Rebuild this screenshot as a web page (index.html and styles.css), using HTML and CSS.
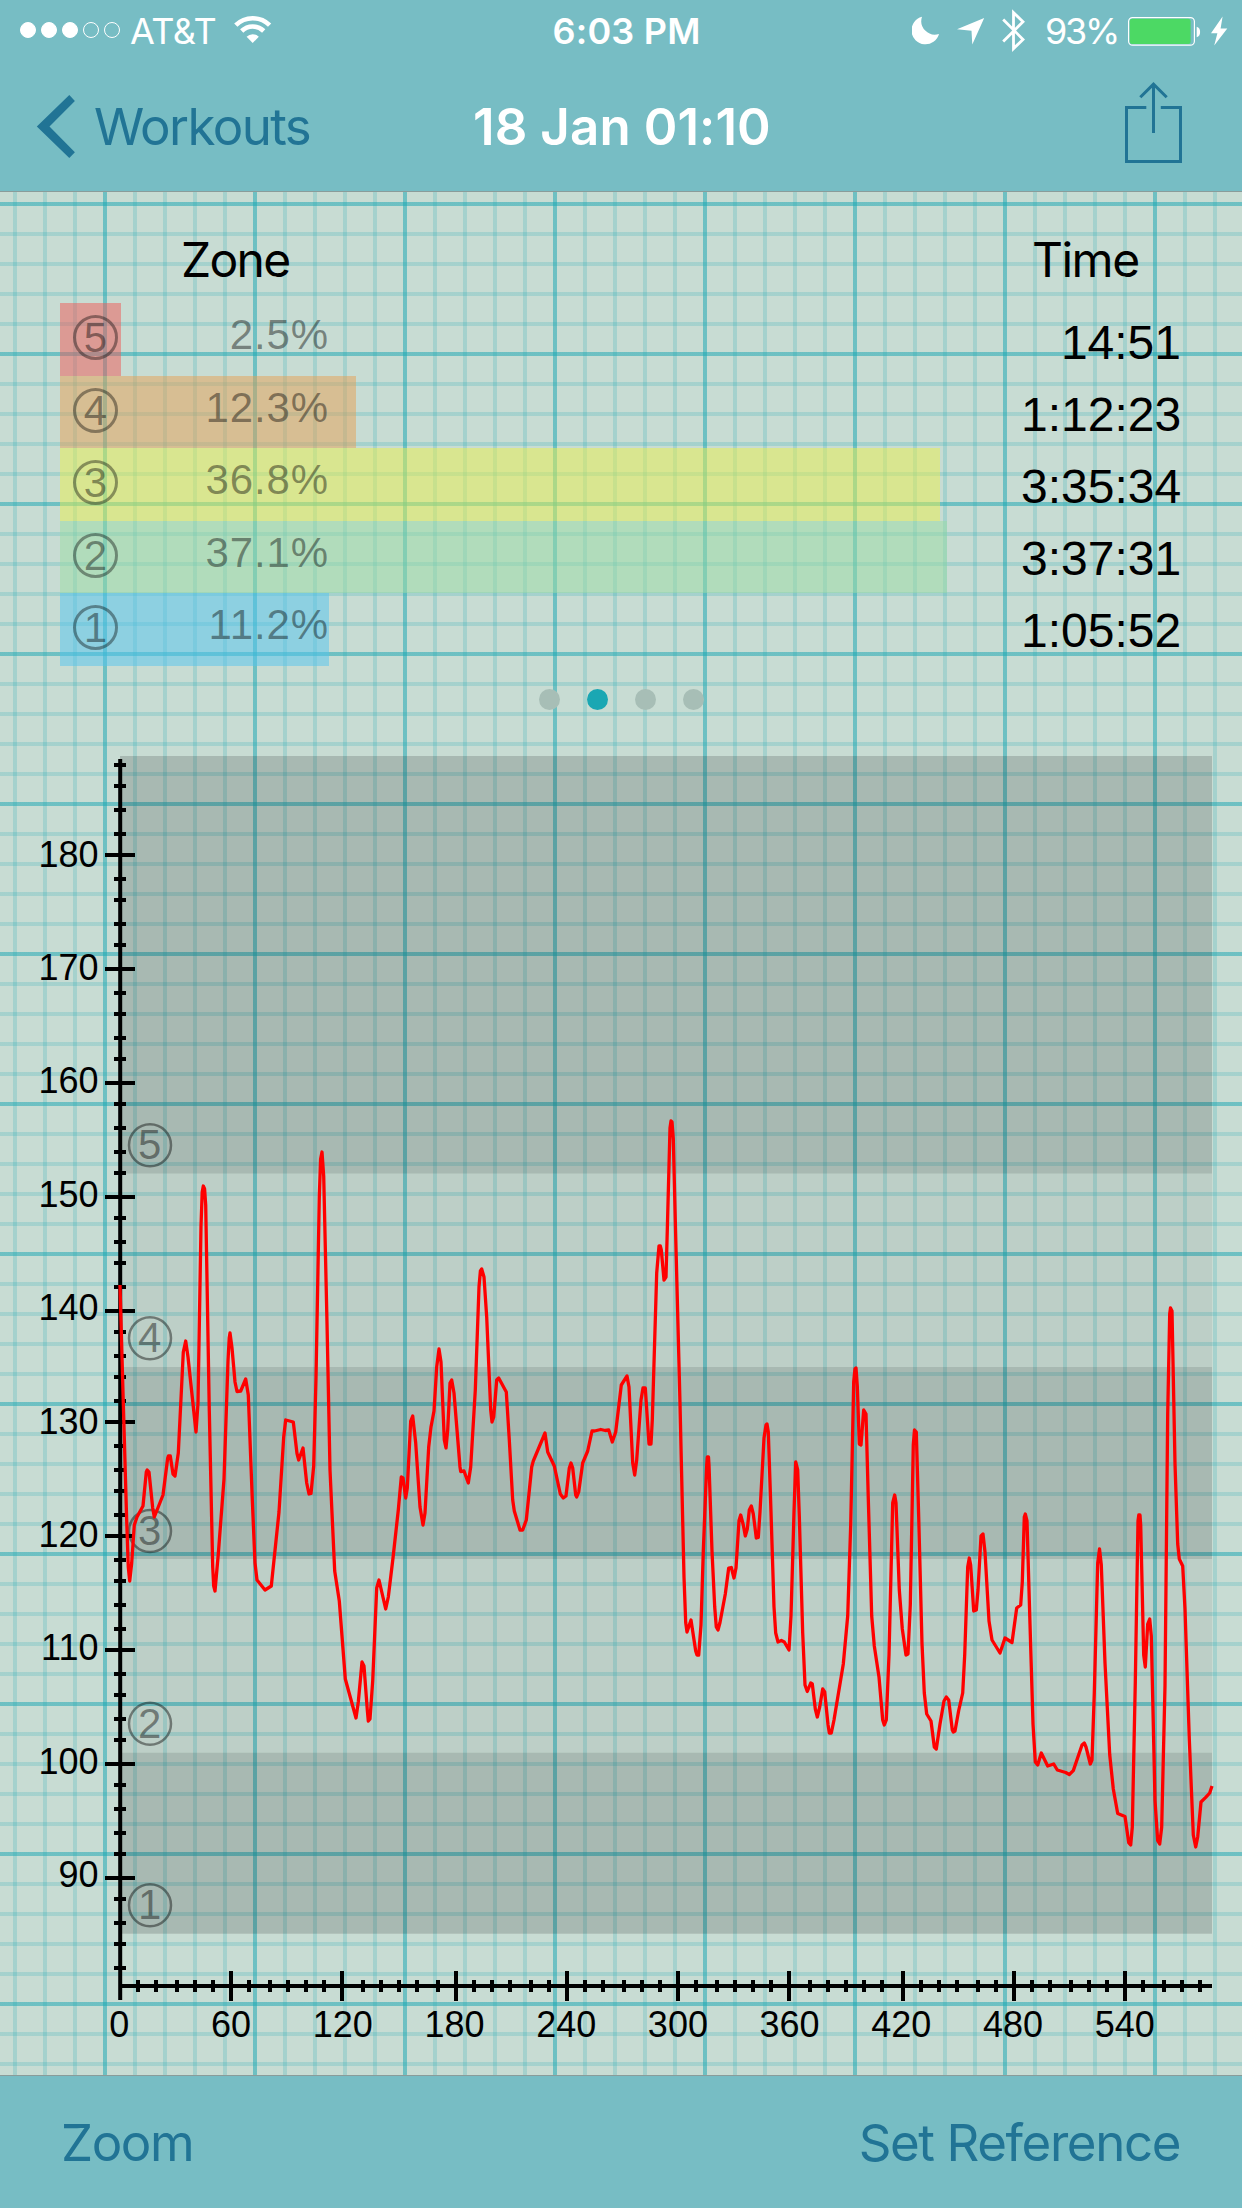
FILE: index.html
```
<!DOCTYPE html>
<html lang="en">
<head>
    <meta charset="UTF-8">
    <meta name="viewport" content="width=device-width, initial-scale=1.0">
    <title>Workout 18 Jan 01:10</title>
    <link rel="stylesheet" href="styles.css">
</head>
<body>
    <header class="header">
        <div class="status-bar">
            <div class="signal">
                <span class="signal-dot full"></span>
                <span class="signal-dot full"></span>
                <span class="signal-dot full"></span>
                <span class="signal-dot"></span>
                <span class="signal-dot"></span>
            </div>
            <span class="carrier">AT&amp;T</span>
            <svg class="wifi" width="38" height="30" viewBox="234 15 38 30">
                <g fill="none" stroke="#fff" stroke-width="4.6">
                    <path d="M235.8 25.2A24 24 0 0 1 269.6 25.2"/>
                    <path d="M241.7 31A15.6 15.6 0 0 1 263.7 31"/>
                </g>
                <path fill="#fff" d="M252.7 43L246.6 36.7A8.6 8.6 0 0 1 258.8 36.7Z"/>
            </svg>
            <span class="clock">6:03 PM</span>
            <div class="status-icons">
                <svg width="113" height="44" viewBox="912 9 113 44" fill="#fff">
                    <path d="M922 16.8A14 14 0 1 0 939 34A13.6 13.6 0 0 1 922 16.8Z"/>
                    <path d="M984.2 18L972.3 44.4L971.5 30.7L957 29.3Z"/>
                    <path fill="none" stroke="#fff" stroke-width="2.8" d="M1003.2 19.5L1023 39.4L1013.5 48.6V12.6L1023 21.8L1003.2 41.6"/>
                </svg>
                <span class="percent">93%</span>
                <svg width="100" height="32" viewBox="1128 14 100 32">
                    <rect x="1128.6" y="16.6" width="65.8" height="27.6" rx="4" fill="none" stroke="#fff" stroke-width="1.2"/>
                    <rect x="1129.8" y="17.8" width="60.8" height="25.2" rx="2.5" fill="#4cd964"/>
                    <path fill="#fff" d="M1196.7 25.8A4.2 5.3 0 0 1 1196.7 36.2Z"/>
                    <path fill="#fff" d="M1222.6 15.5L1211 32.3H1217.4L1214.2 44.6L1227.3 27.6H1220.6Z"/>
                </svg>
            </div>
        </div>
        <nav class="nav-bar">
            <a class="back">
                <svg width="40" height="64" viewBox="36 95 40 64">
                    <path fill="#217495" d="M69.3 95L74.9 101L49.5 126.6L74.9 152.2L69.3 158L36.8 126.6Z"/>
                </svg>
                <span>Workouts</span>
            </a>
            <h1 class="title">18 Jan 01:10</h1>
            <svg class="share" width="58" height="82" viewBox="1125 82 58 82" fill="none" stroke="#217495" stroke-width="3">
                <path d="M1146.3 107.5H1126.5V161.5H1180.5V107.5H1160.8"/>
                <path d="M1153.5 133V84.5M1140.3 97.3L1153.5 84.2L1166.7 97.3"/>
            </svg>
        </nav>
    </header>

    <main>
        <section class="summary">
            <div class="zones">
                <h2>Zone</h2>
                <div class="zone z5" style="width: 61px"><span class="badge">5</span><span class="share-pct">2.5%</span></div>
                <div class="zone z4" style="width: 295.6px"><span class="badge">4</span><span class="share-pct">12.3%</span></div>
                <div class="zone z3" style="width: 880px"><span class="badge">3</span><span class="share-pct">36.8%</span></div>
                <div class="zone z2" style="width: 887.3px"><span class="badge">2</span><span class="share-pct">37.1%</span></div>
                <div class="zone z1" style="width: 269px"><span class="badge">1</span><span class="share-pct">11.2%</span></div>
            </div>
            <div class="times">
                <h2>Time</h2>
                <ul>
                    <li>14:51</li>
                    <li>1:12:23</li>
                    <li>3:35:34</li>
                    <li>3:37:31</li>
                    <li>1:05:52</li>
                </ul>
            </div>
        </section>
        <div class="pager">
            <span></span>
            <span class="current"></span>
            <span></span>
            <span></span>
        </div>
        <svg class="chart" width="1242" height="1335" viewBox="0 740 1242 1335">
            <!-- zone bands -->
            <rect class="band dark" x="120" y="756" width="1092" height="417.5"/>
            <rect class="band" x="120" y="1173.5" width="1092" height="193.5"/>
            <rect class="band dark" x="120" y="1367" width="1092" height="192"/>
            <rect class="band" x="120" y="1559" width="1092" height="193.7"/>
            <rect class="band dark" x="120" y="1752.7" width="1092" height="181"/>
            <path class="axis" d="M120.2 759V2000M118.2 1986H1212"/>
            <g id="ticks" class="axis"></g>
            <g id="marks"></g>
            <polyline id="line" class="line"/>
        </svg>
    </main>

    <footer class="toolbar">
        <a>Zoom</a>
        <a>Set Reference</a>
    </footer>

    <script>
        const NS = 'http://www.w3.org/2000/svg';
        const ticks = document.getElementById('ticks');
        const marks = document.getElementById('marks');

        // snap to whole points (3px each)
        const snap = (v) => Math.round(v / 3) * 3;
        const snapUp = (v) => Math.ceil(v / 3) * 3;

        function tick(d) {
            const p = document.createElementNS(NS, 'path');
            p.setAttribute('d', d);
            ticks.appendChild(p);
        }

        function label(text, x, y, cls) {
            const t = document.createElementNS(NS, 'text');
            t.setAttribute('x', x);
            t.setAttribute('y', y);
            t.setAttribute('class', cls);
            t.textContent = text;
            marks.appendChild(t);
        }

        // heart rate axis
        for (let bpm = 82; bpm <= 188; bpm += 2) {
            const y = snapUp(853.87 + (180 - bpm) * 11.355);
            const r = bpm % 10 === 0 ? 15 : 6;
            tick(`M${120 - r} ${y}H${120 + r}`);
            if (r === 15) {
                label(bpm, 98.5, 866.6 + (180 - bpm) * 11.34, 'y-label');
            }
        }

        // minutes axis
        for (let min = 0; min <= 580; min += 10) {
            const x = snap(120 + min * 1.862);
            const r = min % 60 === 0 ? 15 : 6;
            if (min > 0) {
                tick(`M${x} ${1986 - r}V${1986 + r}`);
            }
            if (r === 15) {
                label(min, 119.3 + min * 1.862, 2037.2, 'x-label');
            }
        }

        // zone numbers inside the plot
        [[5, 1145.3], [4, 1338.2], [3, 1531], [2, 1723.7], [1, 1905.3]].forEach(([n, y]) => {
            const c = document.createElementNS(NS, 'circle');
            c.setAttribute('class', 'zone-ring');
            c.setAttribute('cx', 150);
            c.setAttribute('cy', y);
            c.setAttribute('r', 21);
            marks.appendChild(c);
            label(n, 149.6, y + 13.9, 'zone-mark');
        });

        const heartRate = [
            '120,1285 123.3,1403 126.7,1521 128.3,1567 129.7,1581 131.7,1563 134.3,1525 137,1517 143,1506 146.3,1472 147.2,1470 149,1472 152.7,1508 154.3,1517 163,1495 167.7,1458 168.4,1456 170.3,1456 173,1474 175,1476 178.3,1453 183.3,1352 185.7,1341 188,1357 196,1432 198,1403 201,1226',
            '202.2,1192 203.3,1186 204.6,1189 205.7,1205 209.3,1411 212.7,1567 213.7,1586 215,1591 218.3,1554 224,1479 228,1361 229.2,1338 230,1333 232,1348 235,1382 237,1391.5 240.7,1391 245.7,1379 248.3,1395 252.3,1500 255,1563 257,1580 265,1590 271.3,1586 279,1512 283.7,1437 285.7,1420 293.3,1422 297,1453.5 298.7,1460 303,1448',
            '306.7,1483 309,1494 311,1493.5 313.7,1466 316,1378 319.3,1197 320.6,1159 322,1152 323.7,1176 327,1323 330,1470 334.7,1571 339.3,1601 345.3,1679 356,1718 358.3,1702 362,1662 364,1666 367.3,1710 368.3,1721 370,1719 372.7,1681 376.7,1588 379,1580 385.7,1609 388.3,1597 393,1558 398.3,1510 401.3,1477 403,1478 405.7,1498',
            '407.3,1488 410.7,1421 412.7,1416 415.7,1443 420,1507 423,1525 425,1513 428.7,1447 431,1427 434,1411 436.7,1367 439,1349 441,1362 444.3,1440 446,1448 447.7,1430 450,1383 451.7,1380 454,1393 460,1467 460.7,1471.5 464,1471 468.3,1483 470.7,1467 475.3,1390 479,1287 480.4,1271 481.7,1269 484,1277 486.7,1317 490.7,1410',
            '492,1422 493.7,1417 496.7,1380 498.7,1378 506.3,1392 509.3,1440 512.7,1500 514.3,1511 520,1530 522.7,1530 526.3,1520 531.7,1467 533.3,1461 545,1433 547.7,1452 554.3,1466 560.3,1494 563.3,1498 566,1496 569.3,1468 571,1463 572.7,1468 575.7,1495 576.7,1497 578.7,1492 582.7,1463 587.7,1451 592,1431 594.5,1431 600.7,1429.5 605.3,1430.5',
            '608.7,1430 612.3,1442 615.7,1432 621.3,1385 627,1376 629,1387 632.7,1463 634.7,1475 636.7,1460 641,1400 643,1388 645.3,1388 649,1444 651,1444 652.3,1420 656.7,1273 659,1246 660.3,1246 661.3,1250 664,1280 666,1277 667.3,1230 670,1128 671,1121 672,1122 673.3,1139 675.3,1221 680,1403.5 684,1577 685.7,1622.5 687,1632',
            '691,1620 695.7,1651 697,1655 698.7,1655 701,1625 703.3,1551 706.7,1465 707.3,1457 708.5,1457 709,1465 712,1551 714.7,1607 716.3,1627 718,1630 720,1622.5 725.3,1594 728.7,1568 731.3,1567.5 734,1578 736,1568 739,1520.6 740.7,1515 743.3,1525 745.3,1536 747.3,1529 749.3,1510 751.3,1506 753.3,1514 756.3,1538 758.3,1537.5',
            '760,1512 764,1438 766,1425 767,1424 768.3,1432 771,1512 774,1607 775.7,1633 778,1642 781.3,1640.5 784.3,1642 789,1650 791,1616 794,1512 795.7,1462 797.7,1470 799.3,1516 802.7,1633 805,1685 807.3,1691.5 810.7,1683 812.3,1684 815.3,1709 817.3,1717 819.7,1707 822.7,1689 824.7,1692 828,1724.5 829.3,1733 831.3,1733 834,1720 843.3,1664',
            '847.7,1616 850.7,1525 853.7,1382 855,1369 856,1368 857.3,1386 859.3,1444 861,1445 863.7,1410 866,1414 868.3,1499 871.7,1616 874.3,1646 879,1677 882.7,1720 884.3,1725 886.3,1720 889,1655 892.7,1503 894.7,1495 896,1503 899.3,1590 902.3,1629 906,1655 908,1654 910.3,1605 913.3,1444.6 914.5,1430 916.3,1432 918.7,1517',
            '922,1643.6 924.3,1693 926.7,1714 931,1721 934.3,1747 936.3,1749 940,1724 944,1701 946.3,1697 948.7,1700 952.3,1730 953.3,1732 955,1731 958.7,1710.5 962.7,1693 964.7,1655 967.7,1567 969.3,1558 970.7,1565 973.7,1611 976.3,1610 978,1590 981,1536 983,1534 985,1552 989,1621 992,1640 1000,1653 1005,1638 1012,1642.5',
            '1016.7,1608 1020.7,1605 1022.3,1582 1024.3,1517 1025.3,1514 1027,1521 1030,1624 1033,1724 1035.3,1762 1037.7,1765 1041.3,1753 1047.7,1766 1053.7,1764 1057.3,1770 1065.7,1772.5 1069.3,1774.5 1073.3,1770.6 1082,1745 1084.3,1743 1086,1747 1090.3,1764 1092,1760 1094.3,1693 1097.7,1563 1099.5,1549 1101.3,1565 1105,1663',
            '1109.7,1754.5 1113.3,1789 1117.7,1813.5 1125,1816.5 1128.7,1842.6 1130.7,1845 1132.3,1827 1135.3,1682 1138,1521 1138.8,1515 1140,1515 1140.7,1525 1143.7,1655 1145.3,1667 1147.7,1624 1149.7,1619 1151.3,1636 1155,1800.5 1157.7,1840.7 1159.7,1844 1161.7,1827 1165,1685.7 1167.7,1414 1169.7,1314 1170.5,1308 1172,1311',
            '1175,1463.7 1177.7,1544 1179.3,1559 1182.7,1566 1185,1609 1189.3,1739 1193.3,1835 1195.7,1847 1197.7,1837 1201,1802 1205.7,1797.4 1209.7,1793 1212,1786'
        ];
        document.getElementById('line').setAttribute('points', heartRate.join(' '));
    </script>
</body>
</html>
```
FILE: styles.css
```
body {
    margin: 0;
    width: 1242px;
    height: 2208px;
    overflow: hidden;
    display: flex;
    flex-direction: column;
    font-family: Inter, "Liberation Sans", sans-serif;
    color: #000;
    background-color: #c8dcd3;
    /* graph paper: bold lines every 150px, fine lines every 30px */
    background-image:
        linear-gradient(to right, rgba(26, 167, 179, 0.4) 4px, transparent 4px),
        linear-gradient(to bottom, rgba(26, 167, 179, 0.4) 4px, transparent 4px),
        linear-gradient(to right, rgba(26, 167, 179, 0.2) 4px, transparent 4px),
        linear-gradient(to bottom, rgba(26, 167, 179, 0.2) 4px, transparent 4px);
    background-size: 150px 150px, 150px 150px, 30px 30px, 30px 30px;
    background-position: 103px 0, 0 52px, 13px 0, 0 22px;
}

.header {
    height: 192px;
    box-sizing: border-box;
    background-color: #77bdc4;
    border-bottom: 1px solid #8a9c9a;
}

.status-bar {
    display: flex;
    align-items: center;
    height: 62px;
    padding-left: 20px;
    color: #fff;
    font-size: 36px;
    line-height: 40px;
}

.signal {
    display: flex;
    gap: 5px;
    margin-bottom: 2px;
}

.signal-dot {
    width: 16px;
    height: 16px;
    box-sizing: border-box;
    border: 1px solid #fff;
    border-radius: 50%;
}

.signal-dot.full {
    background-color: #fff;
}

.carrier {
    width: 87px;
    margin-left: 10px;
    letter-spacing: -0.5px;
}

.wifi {
    margin: 0 0 2px 17px;
}

.clock {
    margin-left: 280.5px;
    font-weight: 600;
    letter-spacing: 0.2px;
    white-space: nowrap;
}

.status-icons {
    display: flex;
    align-items: center;
    margin-left: auto;
    margin-right: 14px;
}

.percent {
    width: 83px;
    box-sizing: border-box;
    margin-left: 20px;
    letter-spacing: -2.3px;
}

.nav-bar {
    display: flex;
    align-items: center;
    height: 129px;
    padding: 0 59px 0 36px;
    font-size: 51px;
    line-height: 60px;
}

.back {
    display: flex;
    align-items: center;
    gap: 18px;
    width: 437px;
    color: #217495;
    letter-spacing: -1.6px;
}

.title {
    margin: 0;
    color: #fff;
    font-size: 51px;
    font-weight: 600;
    letter-spacing: 0.1px;
}

.share {
    margin-left: auto;
    margin-bottom: 7px;
}

main {
    flex: 1;
}

.summary {
    display: flex;
    justify-content: space-between;
    height: 497px;
    padding: 0 60px;
}

.summary h2 {
    margin: 0;
    padding: 38px 0 13px 121px;
    font-size: 48px;
    font-weight: 400;
    line-height: 60px;
    letter-spacing: -1.7px;
}

.zone {
    display: flex;
    height: 72.6px;
    font-family: "Liberation Sans", Arial, sans-serif;
    font-size: 42px;
    color: rgba(0, 0, 0, 0.42);
}

.z5 { background-color: rgba(240, 88, 85, 0.5); }
.z4 { background-color: rgba(230, 160, 83, 0.5); }
.z3 { background-color: rgba(234, 240, 77, 0.5); }
.z2 { background-color: rgba(154, 220, 163, 0.5); }
.z1 { background-color: rgba(82, 196, 239, 0.5); }

.badge {
    flex: none;
    width: 39px;
    height: 39px;
    margin: 12px 0 0 13px;
    border: 3px solid rgba(0, 0, 0, 0.38);
    border-radius: 50%;
    line-height: 39px;
    text-align: center;
}

.share-pct {
    flex: none;
    width: 211px;
    line-height: 63px;
    letter-spacing: 0.9px;
    text-align: right;
}

.times {
    width: 160px;
}

.times h2 {
    padding-left: 10px;
    letter-spacing: -1.5px;
}

.times ul {
    margin: 0 1px 0 -1px;
    padding: 4px 0 0;
    list-style: none;
    font-family: "Liberation Sans", Arial, sans-serif;
    font-size: 48px;
    line-height: 72.1px;
    text-align: right;
}

.pager {
    display: flex;
    justify-content: center;
    gap: 27px;
    height: 51px;
}

.pager span {
    width: 21px;
    height: 21px;
    border-radius: 50%;
    background-color: #a7beb6;
}

.pager .current {
    background-color: #1aa7b3;
}

.chart {
    display: block;
    font-family: "Liberation Sans", Arial, sans-serif;
    font-size: 36px;
}

.band {
    fill: rgba(0, 0, 0, 0.055);
}

.band.dark {
    fill: rgba(0, 0, 0, 0.155);
}

.axis {
    fill: none;
    stroke: #000;
    stroke-width: 4;
}

.y-label {
    text-anchor: end;
}

.x-label {
    text-anchor: middle;
}

.zone-ring {
    fill: none;
    stroke: rgba(0, 0, 0, 0.42);
    stroke-width: 2.5;
}

.zone-mark {
    font-size: 42px;
    text-anchor: middle;
    fill: rgba(0, 0, 0, 0.42);
}

.line {
    fill: none;
    stroke: #f00;
    stroke-width: 3.3;
    stroke-linejoin: round;
}

.toolbar {
    display: flex;
    align-items: center;
    justify-content: space-between;
    box-sizing: border-box;
    height: 133px;
    padding: 0 62px 0 61px;
    border-top: 1px solid #8a9c9a;
    background-color: #77bdc4;
    color: #217495;
    font-size: 51px;
    letter-spacing: -1.4px;
}
```
